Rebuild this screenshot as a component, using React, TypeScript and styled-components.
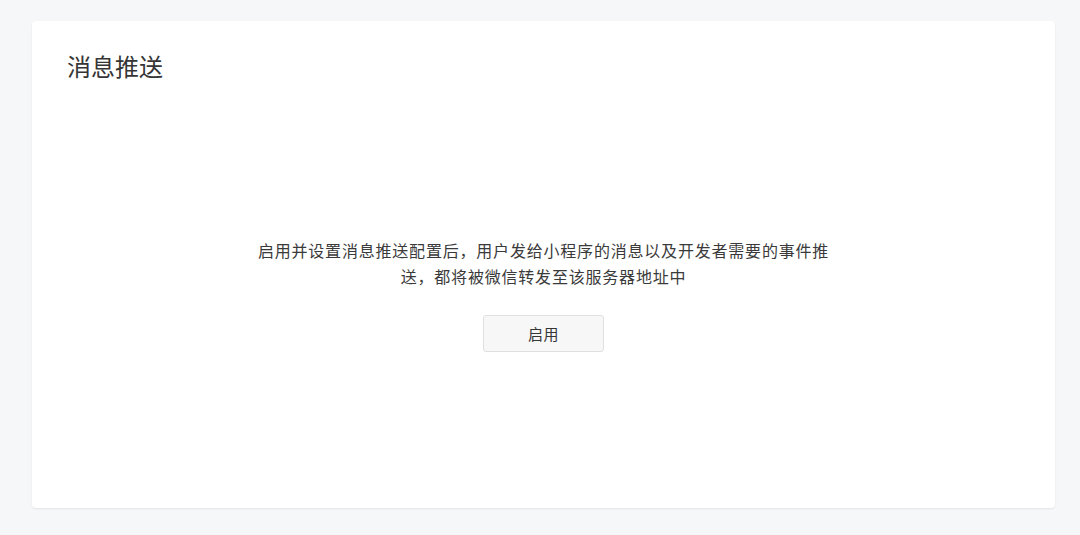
import React from 'react';
import styled, { createGlobalStyle } from 'styled-components';

const GlobalStyle = createGlobalStyle`
  html, body {
    margin: 0;
    padding: 0;
    background: #f6f7f9;
  }
  body {
    font-family: "Liberation Sans", "Noto Sans CJK SC", sans-serif;
    color: #353535;
  }
`;

const Page = styled.div`
  padding: 21px 25px 27px 32px;
  height: 535px;
  box-sizing: border-box;
`;

const Card = styled.section`
  height: 100%;
  box-sizing: border-box;
  background: #fff;
  border-radius: 4px;
  box-shadow: 0 1px 2px rgba(0, 0, 0, 0.08);
  display: flex;
  flex-direction: column;
  padding: 30px 35px 0;
`;

const Title = styled.h2`
  margin: 0;
  font-size: 24px;
  font-weight: normal;
  line-height: 34px;
  color: #353535;
`;

const Body = styled.div`
  flex: 1;
  display: flex;
  flex-direction: column;
  align-items: center;
  justify-content: center;
  padding-bottom: 2px;
`;

const Desc = styled.p`
  margin: 0;
  width: 580px;
  text-align: center;
  font-size: 16px;
  letter-spacing: 0.8px;
  line-height: 26px;
  color: #3a3a3a;
`;

const Button = styled.button`
  margin-top: 24px;
  width: 121px;
  height: 37px;
  border: 1px solid #e0e0e0;
  border-radius: 3px;
  background: #f7f7f7;
  color: #353535;
  font-family: inherit;
  font-size: 15px;
  letter-spacing: 0.5px;
  cursor: pointer;
`;

export default function App() {
  return (
    <>
      <GlobalStyle />
      <Page>
        <Card>
          <Title>消息推送</Title>
          <Body>
            <Desc>
              启用并设置消息推送配置后，用户发给小程序的消息以及开发者需要的事件推送，都将被微信转发至该服务器地址中
            </Desc>
            <Button>启用</Button>
          </Body>
        </Card>
      </Page>
    </>
  );
}
